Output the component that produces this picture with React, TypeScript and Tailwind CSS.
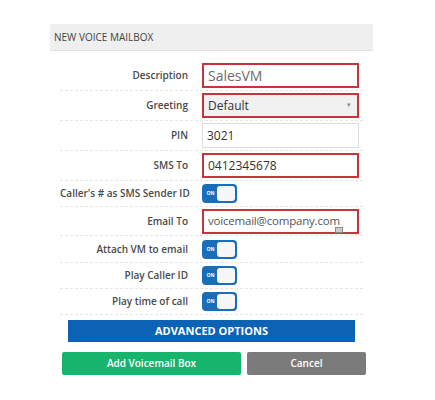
import React from 'react';

type Field = {
  label: string;
  kind: 'input' | 'select' | 'toggle';
  value?: string;
  error?: boolean;
  height: string;
  valueClass?: string;
  extra?: boolean;
};

const fields: Field[] = [
  { label: 'Description', kind: 'input', value: 'SalesVM', error: true, height: 'h-[30px]', valueClass: 'text-[14px] text-[#6b6b6b]' },
  { label: 'Greeting', kind: 'select', value: 'Default', error: true, height: 'h-[30px]' },
  { label: 'PIN', kind: 'input', value: '3021', height: 'h-[30px]' },
  { label: 'SMS To', kind: 'input', value: '0412345678', error: true, height: 'h-[30px]' },
  { label: "Caller's # as SMS Sender ID", kind: 'toggle', height: 'h-[26px]' },
  { label: 'Email To', kind: 'input', value: 'voicemail@company.com', error: true, height: 'h-[29px]', valueClass: 'text-[11.5px] tracking-[-0.2px] text-[#555]', extra: true },
  { label: 'Attach VM to email', kind: 'toggle', height: 'h-[27px]' },
  { label: 'Play Caller ID', kind: 'toggle', height: 'h-[26px]' },
  { label: 'Play time of call', kind: 'toggle', height: 'h-[26px]' },
];

function Toggle() {
  return (
    <div className="flex h-[19px] w-[35px] items-center rounded-[4px] bg-[#1a6db8] p-[2px]">
      <div className="flex flex-1 items-center justify-center">
        <span className="text-[5px] font-bold leading-none text-white">ON</span>
      </div>
      <div className="h-[15px] w-[18px] rounded-[3px] bg-[#f7f7f7]" />
    </div>
  );
}

function FieldControl({ field }: { field: Field }) {
  if (field.kind === 'toggle') return <Toggle />;

  const border = field.error ? 'border-2 border-[#c8343c]' : 'border border-[#dcdcdc]';
  const bg = field.kind === 'select' ? 'bg-[#f1f1f1]' : 'bg-white';

  return (
    <div className={`relative flex h-[25px] w-[157px] items-center px-[4px] ${border} ${bg}`}>
      <span className={`whitespace-nowrap ${field.valueClass ?? 'text-[12px] text-[#333]'}`}>{field.value}</span>
      {field.kind === 'select' && (
        <span className="ml-auto mr-[2px] text-[7px] text-[#888]">▾</span>
      )}
      {/* autofill hint icon */}
      {field.extra && (
        <span className="absolute right-[14px] top-[16px] h-[6px] w-[8px] border border-[#888] bg-[#ccc]" />
      )}
    </div>
  );
}

export default function App() {
  return (
    <div className="h-[400px] w-[435px] bg-white" style={{ fontFamily: '"Open Sans", "Noto Sans", sans-serif' }}>
      <div className="ml-[50px] w-[323px] pt-[24px]">
        {/* Header */}
        <div className="flex h-[27px] items-center border-b border-[#e2e2e2] bg-[#efefef] px-[4px]">
          <span className="text-[10px] uppercase text-[#444]">New Voice Mailbox</span>
        </div>

        {/* Form rows */}
        <div className="mt-[10px] px-[10px]">
          {fields.map((f) => (
            <div
              key={f.label}
              className={`flex items-center border-b border-dashed border-[#e6e6e6] ${f.height}`}
            >
              <div className="w-[128px] whitespace-nowrap text-right text-[10px] font-semibold text-[#4a4a4a]">
                {f.label}
              </div>
              <div className="ml-[14px]">
                <FieldControl field={f} />
              </div>
            </div>
          ))}
        </div>

        {/* Advanced */}
        <div className="mt-[5px] px-[18px]">
          <button className="flex h-[22px] w-full items-center justify-center bg-[#0c63b6] text-[11px] font-bold text-white">
            ADVANCED OPTIONS
          </button>
        </div>

        {/* Actions */}
        <div className="mt-[10px] flex gap-[6px] pl-[12px] pr-[7px]">
          <button className="h-[23px] w-[179px] rounded-[2px] bg-[#17b46e] text-[10px] font-semibold text-white">
            Add Voicemail Box
          </button>
          <button className="h-[23px] flex-1 rounded-[2px] bg-[#7b7b7b] text-[10px] font-semibold text-white">
            Cancel
          </button>
        </div>
      </div>
    </div>
  );
}
